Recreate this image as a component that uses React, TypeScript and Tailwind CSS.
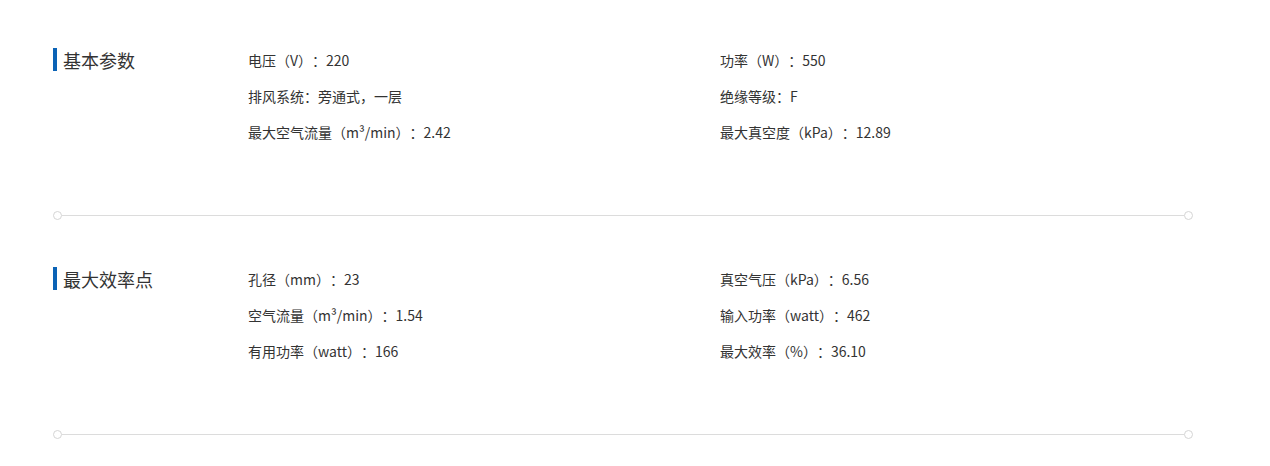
const sections = [
  {
    title: "基本参数",
    rows: [
      ["电压（V）：220", "功率（W）：550"],
      ["排风系统：旁通式，一层", "绝缘等级：F"],
      ["最大空气流量（m³/min）：2.42", "最大真空度（kPa）：12.89"],
    ],
  },
  {
    title: "最大效率点",
    rows: [
      ["孔径（mm）：23", "真空气压（kPa）：6.56"],
      ["空气流量（m³/min）：1.54", "输入功率（watt）：462"],
      ["有用功率（watt）：166", "最大效率（%）：36.10"],
    ],
  },
];

const Divider = () => (
  <div className="relative h-[9px] flex items-center">
    <div className="w-[9px] h-[9px] rounded-full border border-[#d5d5d5] bg-white shrink-0" />
    <div className="flex-1 h-px bg-[#dcdcdc]" />
    <div className="w-[9px] h-[9px] rounded-full border border-[#d5d5d5] bg-white shrink-0" />
  </div>
);

export default function App() {
  return (
    <div
      className="bg-white w-[1270px] h-[466px] overflow-hidden text-[#333] [text-spacing-trim:space-all]"
      style={{ fontFamily: '"Microsoft YaHei", "Noto Sans CJK SC", sans-serif' }}
    >
      <div className="ml-[53px] w-[1140px] pt-px">
        {sections.map((s) => (
          <div key={s.title}>
            <div className="flex pt-[41px] pb-[61px]">
              <div className="w-[195px] shrink-0">
                <div className="flex items-center h-[36px] pb-px">
                  <span className="w-[4px] h-[23px] bg-[#0b63b6] mr-[6px]" />
                  <span className="text-[18px] leading-none">{s.title}</span>
                </div>
              </div>
              <div className="flex-1">
                {s.rows.map((r, i) => (
                  <div key={i} className="flex h-[36px] items-center text-[14px] leading-none pb-px">
                    <div className="w-[472px]">{r[0]}</div>
                    <div>{r[1]}</div>
                  </div>
                ))}
              </div>
            </div>
            <Divider />
          </div>
        ))}
      </div>
    </div>
  );
}
